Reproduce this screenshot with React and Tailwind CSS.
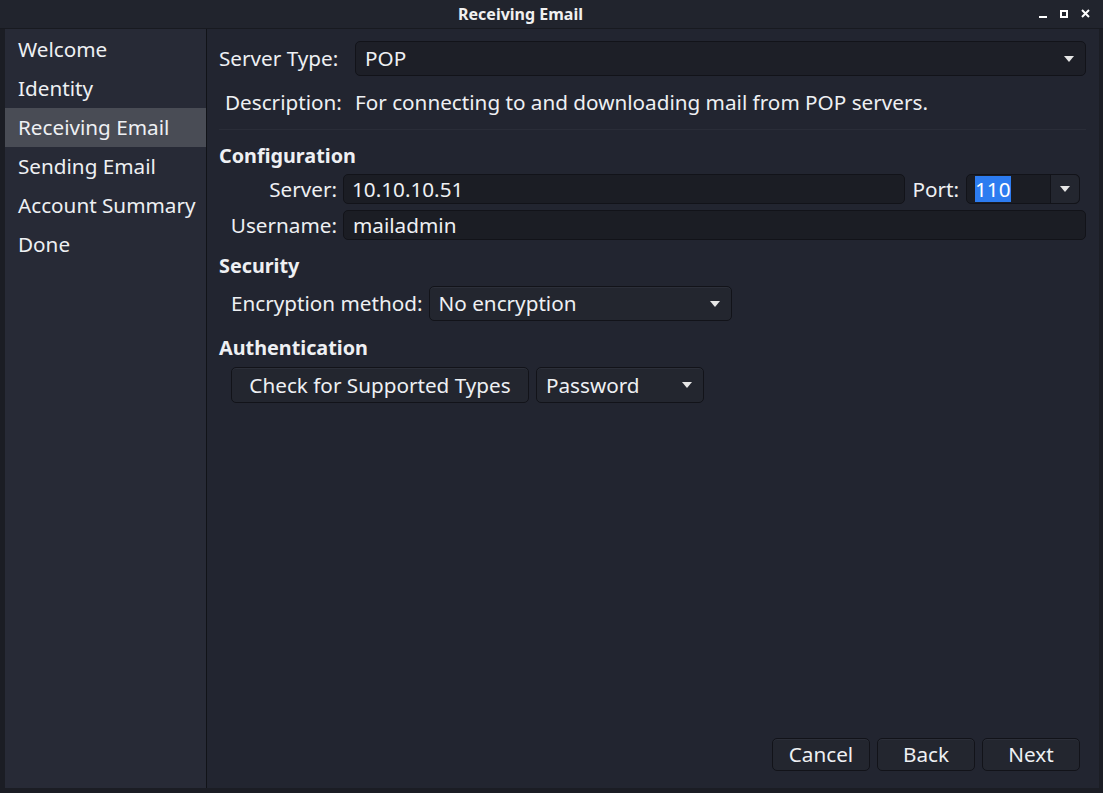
import React from 'react';

const STEPS = ['Welcome', 'Identity', 'Receiving Email', 'Sending Email', 'Account Summary', 'Done'];

function Caret() {
  return (
    <svg width="10" height="6" viewBox="0 0 10 6" className="shrink-0">
      <path d="M0 0h10L5 6z" fill="#e6e6e6" />
    </svg>
  );
}

function Combo({ value, className = '', flat = false }) {
  return (
    <div className={`flex items-center justify-between rounded-[5px] border border-[#121319] pl-[9px] pr-[11px] ${flat ? 'bg-[#1d1f27]' : 'bg-[#23262f] shadow-[inset_0_1px_0_#2c2f39]'} ${className}`}>
      <span>{value}</span>
      <Caret />
    </div>
  );
}

function Button({ children, className = '' }) {
  return (
    <div className={`flex items-center justify-center rounded-[5px] border border-[#121319] bg-[#23262f] shadow-[inset_0_1px_0_#2c2f39] ${className}`}>
      {children}
    </div>
  );
}

export default function App() {
  return (
    <div className="w-[1103px] h-[793px] bg-[#1b1d24] text-[#eef0f3] text-[20.7px] leading-none overflow-hidden" style={{ fontFamily: '"Noto Sans", "Open Sans", sans-serif' }}>
      <div className="h-[29px] bg-[#21242d] relative flex items-center justify-center pr-[62px] border-b border-[#181a20]">
        <span className="text-[16px] font-bold text-[#f0f0f0]">Receiving Email</span>
        <div className="absolute right-[13px] top-[9px] flex items-center gap-[13px]">
          <div className="w-[8px] h-[2px] bg-white mt-[7px]" />
          <div className="w-[8px] h-[8px] border-2 border-white" />
          <svg width="9" height="9" viewBox="0 0 9 9"><path d="M1 1l7 7M8 1L1 8" stroke="white" strokeWidth="2" /></svg>
        </div>
      </div>

      <div className="flex h-[759px] ml-[5px] mr-[4px]">
        <div className="w-[202px] bg-[#272a36] border-r border-[#111318] pt-[1px]">
          {STEPS.map((s) => (
            <div key={s} className={`h-[39px] flex items-center pl-[13px] ${s === 'Receiving Email' ? 'bg-[#494c55]' : ''}`}>{s}</div>
          ))}
        </div>

        <div className="flex-1 bg-[#222530] flex flex-col pl-[12px] pr-[13px] pt-[12px] pb-[17px]">
          <div className="flex items-center h-[35px]">
            <span className="w-[136px]">Server Type:</span>
            <Combo value="POP" className="flex-1 h-[35px]" flat />
          </div>
          <div className="flex items-center h-[54px] border-b border-[#2a2d38] pb-[1px]">
            <span className="w-[136px] pl-[6px]">Description:</span>
            <span>For connecting to and downloading mail from POP servers.</span>
          </div>

          <div className="font-bold text-[19.8px] mt-[16px] h-[20px] flex items-center">Configuration</div>
          <div className="flex items-center mt-[8px] h-[30px]">
            <span className="w-[124px] text-right pr-[6px]">Server:</span>
            <div className="flex-1 h-[30px] rounded-[5px] border border-[#121319] bg-[#1b1d24] flex items-center pl-[8px]">10.10.10.51</div>
            <span className="ml-[7px] mr-[7px]">Port:</span>
            <div className="w-[114px] h-[30px] rounded-[5px] border border-[#121319] bg-[#1b1d24] flex items-center">
              <div className="flex-1 pl-[8px] flex items-center">
                <span className="bg-[#2d7cf0] text-white h-[26px] flex items-center">110</span>
              </div>
              <div className="w-[29px] h-full border-l border-[#121319] bg-[#23262f] flex items-center justify-center rounded-r-[5px]"><Caret /></div>
            </div>
            <div className="w-[6px]" />
          </div>
          <div className="flex items-center mt-[6px] h-[30px]">
            <span className="w-[124px] text-right pr-[6px]">Username:</span>
            <div className="flex-1 h-[30px] rounded-[5px] border border-[#121319] bg-[#1b1d24] flex items-center pl-[9px]">mailadmin</div>
          </div>

          <div className="font-bold text-[19.8px] mt-[16px] h-[20px] flex items-center">Security</div>
          <div className="flex items-center mt-[10px]">
            <span className="pl-[12px] pr-[6px]">Encryption method:</span>
            <Combo value="No encryption" className="w-[303px] h-[35px]" />
          </div>

          <div className="font-bold text-[19.8px] mt-[17px] h-[20px] flex items-center">Authentication</div>
          <div className="flex items-center mt-[9px] pl-[12px] gap-[7px]">
            <Button className="w-[298px] h-[36px]">Check for Supported Types</Button>
            <Combo value="Password" className="w-[168px] h-[36px]" />
          </div>

          <div className="flex-1" />
          <div className="flex justify-end gap-[7px] pr-[6px]">
            <Button className="w-[98px] h-[33px]">Cancel</Button>
            <Button className="w-[98px] h-[33px]">Back</Button>
            <Button className="w-[98px] h-[33px]">Next</Button>
          </div>
        </div>
      </div>
    </div>
  );
}
